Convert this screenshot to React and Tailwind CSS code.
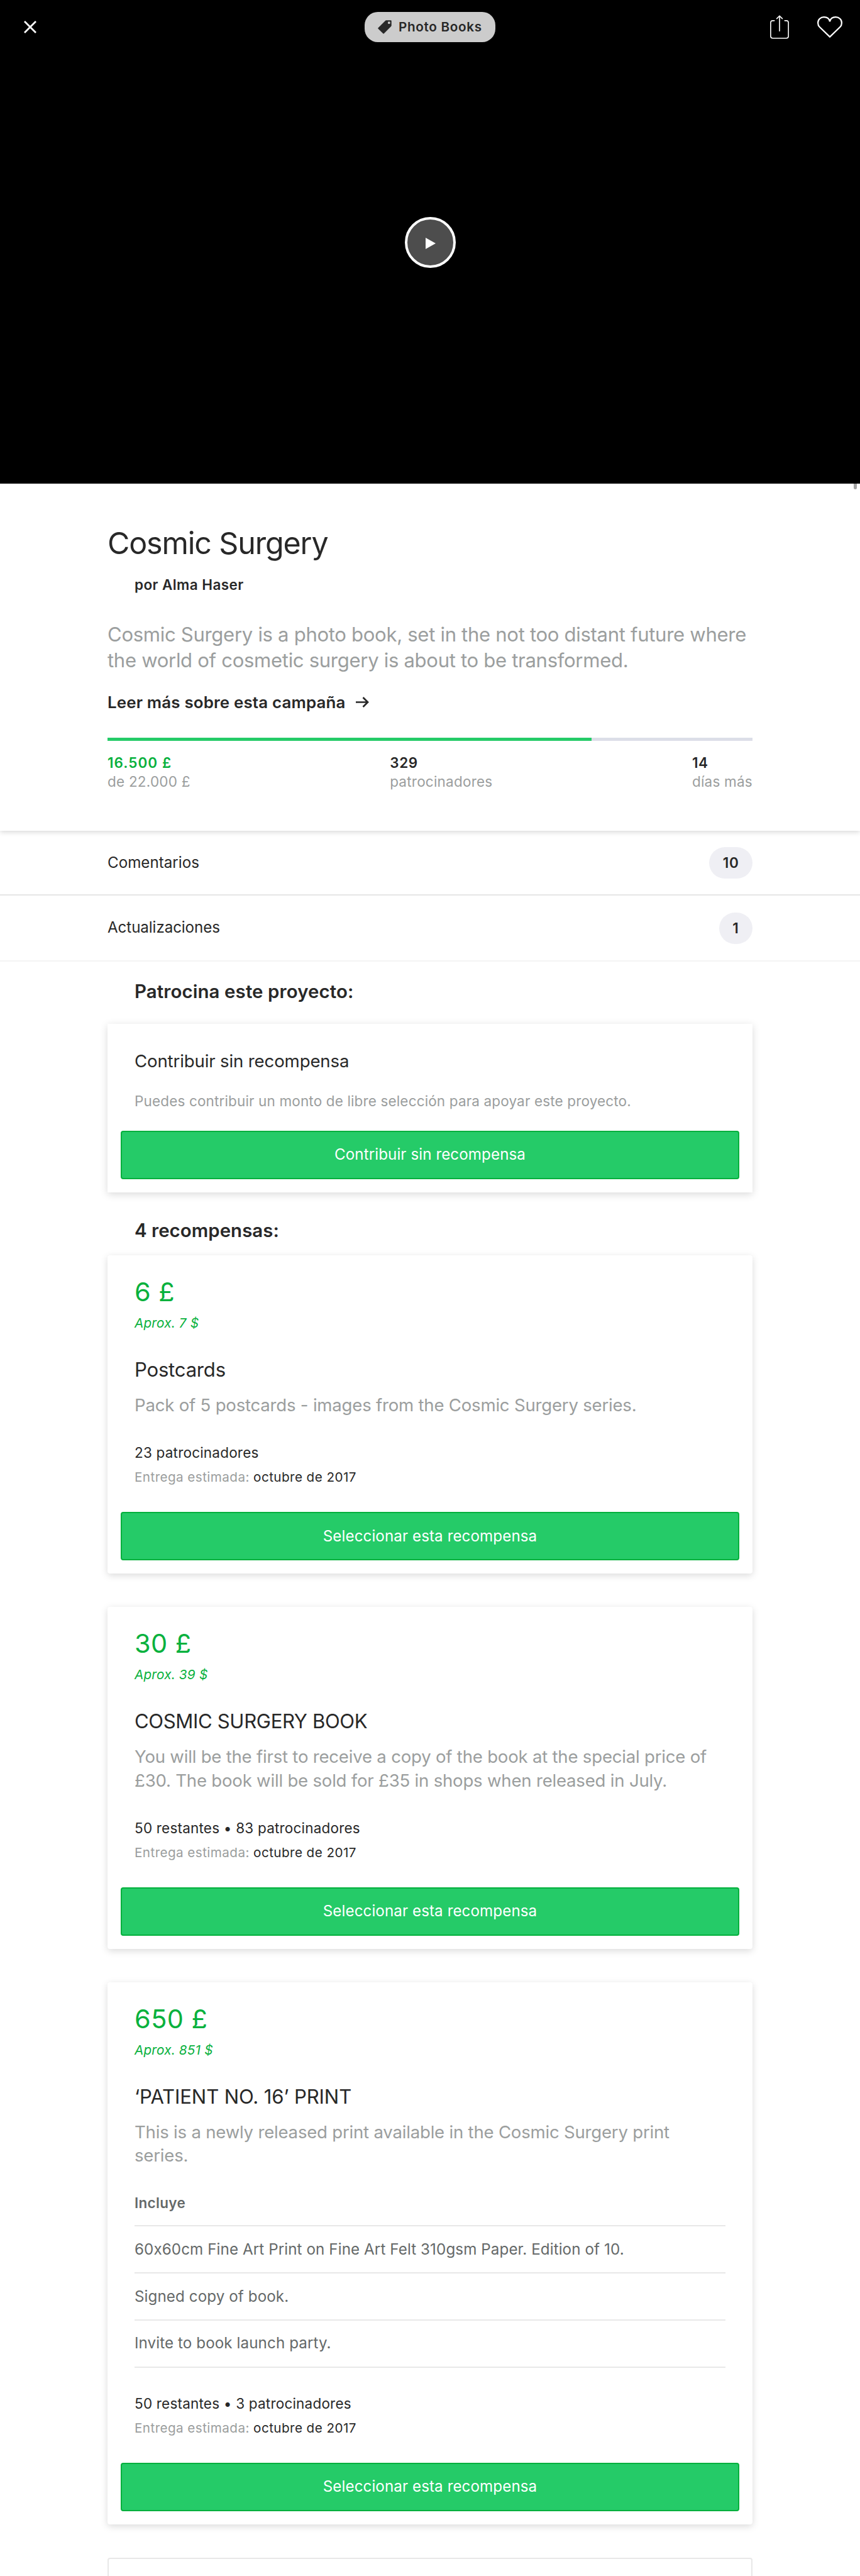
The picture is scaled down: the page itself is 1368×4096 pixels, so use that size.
import React from "react";

const rewards = [
  {
    price: "6 £",
    approx: "Aprox. 7 $",
    title: "Postcards",
    titleClass: "tracking-[-0.0068em]",
    lines: ["Pack of 5 postcards - images from the Cosmic Surgery series."],
    backers: "23 patrocinadores",
  },
  {
    price: "30 £",
    approx: "Aprox. 39 $",
    title: "COSMIC SURGERY BOOK",
    titleClass: "tracking-[-0.0117em]",
    lines: [
      "You will be the first to receive a copy of the book at the special price of",
      "£30. The book will be sold for £35 in shops when released in July.",
    ],
    backers: "50 restantes • 83 patrocinadores",
  },
  {
    price: "650 £",
    approx: "Aprox. 851 $",
    title: "‘PATIENT NO. 16’ PRINT",
    titleClass: "tracking-[-0.0041em]",
    lines: ["This is a newly released print available in the Cosmic Surgery print", "series."],
    includes: [
      "60x60cm Fine Art Print on Fine Art Felt 310gsm Paper. Edition of 10.",
      "Signed copy of book.",
      "Invite to book launch party.",
    ],
    backers: "50 restantes • 3 patrocinadores",
  },
];

function CloseIcon() {
  return (
    <svg className="h-5 w-5" viewBox="0 0 20 20" fill="none" stroke="#fff" strokeWidth="2.8">
      <path d="M1 1L19 19M19 1L1 19" />
    </svg>
  );
}

function TagIcon() {
  return (
    <svg className="h-[22px] w-[22px]" viewBox="164 107 74 74">
      <path
        fill="#282828"
        fillRule="evenodd"
        d="M208 108H233Q237 108 237 112V136Q237 138 235.500 139.500L197 178.500Q194.500 181 192 178.500L166 153.500Q163.500 151 166 148.500L204 110Q206 108 208 108ZM224 114.500A6.500 6.500 0 1 0 224 127.500A6.500 6.500 0 1 0 224 114.500Z"
      />
    </svg>
  );
}

function ShareIcon() {
  return (
    <svg className="h-[38px] w-[30px]" viewBox="105 76 102 129" fill="none" stroke="#fff" strokeWidth="5.500" strokeLinecap="round" strokeLinejoin="round">
      <path d="M128 106H119Q108 106 108 117V190Q108 201 119 201H193Q204 201 204 190V117Q204 106 193 106H184" />
      <path d="M156 162V81M141 95L156 80L171 95" />
    </svg>
  );
}

function HeartIcon() {
  return (
    <svg className="h-9 w-[42px]" viewBox="358 82 140 120" fill="none" stroke="#fff" strokeWidth="7.500" strokeLinejoin="miter">
      <path d="M428 194L374 142C367 135 365 127 365 120C365 102 379 89 397 89C413 89 425 98 428 113C431 98 443 89 459 89C477 89 491 102 491 120C491 127 489 135 482 142Z" />
    </svg>
  );
}

function Hero() {
  return (
    <header className="flex h-[769px] flex-col bg-black">
      <div className="grid h-[85px] grid-cols-3 items-center pl-[38px] pr-[27px] pt-px">
        <button className="justify-self-start" aria-label="Cerrar">
          <CloseIcon />
        </button>
        <div className="ml-[-11px] flex h-12 w-[208px] items-center justify-self-center rounded-[21px] bg-[#ccc] pl-[21px]">
          <TagIcon />
          <span className="ml-[11px] whitespace-nowrap text-[20.7px] font-semibold tracking-[0.032em]">Photo Books</span>
        </div>
        <div className="flex items-center gap-11 justify-self-end">
          <ShareIcon />
          <HeartIcon />
        </div>
      </div>
      <div className="flex grow items-center justify-center pb-[84px]">
        <button className="flex h-[81px] w-[81px] items-center justify-center rounded-full border-4 border-white bg-[#4d4d4d]" aria-label="Reproducir">
          <svg className="ml-[2px] mt-[3px] h-[18px] w-[16px]" viewBox="0 0 16 18">
            <path d="M0 0L16 9L0 18Z" fill="#fff" />
          </svg>
        </button>
      </div>
    </header>
  );
}

function Stat({ value, label, green }) {
  return (
    <div className="text-[22.5px]">
      <div className={green ? "h-[27px] font-semibold leading-[27px] tracking-[0.046em] text-[#08b13d]" : "h-[27px] font-semibold leading-[27px] tracking-[0.03em]"}>{value}</div>
      <div className="mt-[2px] leading-[29px] tracking-[0.01em] text-[#9b9e9e]">{label}</div>
    </div>
  );
}

function Summary() {
  return (
    <section className="relative h-[552px] bg-white px-[171px] pt-[65px] shadow-[0_2px_8px_rgba(0,0,0,0.16)]">
      <div className="absolute right-[5px] top-0 h-[9px] w-[5px] rounded-b-sm bg-[#a3a3a3]" />
      <h1 className="text-[48.4px] leading-[59px] tracking-[-0.0235em]">Cosmic Surgery</h1>
      <p className="ml-[43px] mt-[23px] text-[22.5px] font-semibold leading-[27px] tracking-[0.0185em]">por Alma Haser</p>
      <p className="mt-[46px] h-[81px] whitespace-nowrap text-[31.1px] leading-[40.6px] tracking-[-0.0103em] text-[#9b9e9e]">
        Cosmic Surgery is a photo book, set in the not too distant future where
        <br />
        the world of cosmetic surgery is about to be transformed.
      </p>
      <a className="mt-[30px] flex items-center gap-4 text-[25.9px] font-semibold leading-[33px] tracking-[0.006em]">
        Leer más sobre esta campaña
        <svg className="h-[17px] w-[21px]" viewBox="0 0 21 17" fill="none" stroke="#282828" strokeWidth="2.700">
          <path d="M0 8.500H19M11.500 1L19 8.500L11.500 16" />
        </svg>
      </a>
      <div className="mt-10 h-[5px] bg-[#dcdee8]">
        <div className="h-full w-3/4 bg-[#25cb68]" />
      </div>
      <div className="mt-[21px] flex justify-between">
        <Stat value="16.500 £" label="de 22.000 £" green />
        <Stat value="329" label="patrocinadores" />
        <Stat value="14" label="días más" />
      </div>
    </section>
  );
}

function CountPill({ children }) {
  return (
    <span className="flex h-[50px] items-center rounded-[25px] bg-[#efeff4] px-[21.5px] text-[22.5px] font-semibold tracking-[0.03em]">
      {children}
    </span>
  );
}

function SelectButton({ children }) {
  return (
    <button className="mx-[21.4px] flex h-[77px] items-center justify-center rounded-[4px] border-2 border-[#04b03d] bg-[#25cb68] text-[24.2px] tracking-[0.003em] text-white">
      {children}
    </button>
  );
}

function RewardCard({ reward }) {
  return (
    <article className="flex flex-col rounded-[4px] bg-white pb-[21px] pt-[33px] shadow-[0_3px_12px_rgba(0,0,0,0.15)]">
      <div className="px-[43px]">
        <p className="text-[41.5px] leading-[50px] tracking-[0.01em] text-[#08b13d]">{reward.price}</p>
        <p className="mt-3 text-[20.7px] italic leading-[25px] tracking-[0.01em] text-[#08b13d]">{reward.approx}</p>
        <h3 className={`mt-[42px] text-[31.1px] leading-10 ${reward.titleClass}`}>{reward.title}</h3>
        <div className="mt-[18px] text-[27.6px] leading-[37.3px] tracking-[-0.008em] text-[#9b9e9e]">
          {reward.lines.map((line) => (
            <p key={line} className="whitespace-nowrap">{line}</p>
          ))}
        </div>
        {reward.includes && (
          <div className="mt-[43px] text-[#656969]">
            <h4 className="text-[22.5px] font-semibold leading-[27px] tracking-[0.0134em]">Incluye</h4>
            <ul className="mt-[22px] border-t-2 border-[#e8e8e8]">
              {reward.includes.map((item) => (
                <li key={item} className="flex h-[74.8px] items-center border-b-2 border-[#e8e8e8] text-[24.2px] tracking-[0.0035em] [font-feature-settings:'calt'_0]">
                  {item}
                </li>
              ))}
            </ul>
          </div>
        )}
        <p className="mt-[43px] text-[22.5px] leading-[27px] tracking-[0.009em]">{reward.backers}</p>
        <p className="mt-[13px] text-[20.7px] leading-[25px] tracking-[0.02em]">
          <span className="text-[#9b9e9e]">Entrega estimada:</span> octubre de 2017
        </p>
      </div>
      <div className="mt-[43px] flex flex-col">
        <SelectButton>Seleccionar esta recompensa</SelectButton>
      </div>
    </article>
  );
}

export default function App() {
  return (
    <div className="h-[4096px] w-[1368px] overflow-hidden bg-white font-['Inter',sans-serif] text-[#282828]">
      <Hero />
      <Summary />
      <nav className="text-[24.2px]">
        <div className="flex h-[103px] items-center justify-between border-b-2 border-[#e6e6e6] px-[171px] pt-px">
          <span>Comentarios</span>
          <CountPill>10</CountPill>
        </div>
        <div className="flex h-[105px] items-center justify-between border-b-2 border-[#f4f4f4] px-[171px]">
          <span className="tracking-[-0.0038em]">Actualizaciones</span>
          <CountPill>1</CountPill>
        </div>
      </nav>
      <main className="px-[171px] pt-7">
        <h2 className="ml-[43px] text-[29.4px] font-semibold leading-[39px] tracking-[0.004em]">Patrocina este proyecto:</h2>
        <section className="mt-8 flex flex-col bg-white pb-[21px] pt-[41px] shadow-[0_3px_12px_rgba(0,0,0,0.15)]">
          <h3 className="px-[43px] text-[27.6px] leading-9 tracking-[-0.005em]">Contribuir sin recompensa</h3>
          <p className="mb-[34px] mt-8 px-[43px] text-[22.5px] leading-[27px] tracking-[0.0064em] text-[#9b9e9e]">
            Puedes contribuir un monto de libre selección para apoyar este proyecto.
          </p>
          <SelectButton>Contribuir sin recompensa</SelectButton>
        </section>
        <h2 className="ml-[43px] mt-[41px] text-[29.4px] font-semibold leading-[39px] tracking-[0.002em]">4 recompensas:</h2>
        <div className="mt-5 flex flex-col gap-[53px]">
          {rewards.map((reward) => (
            <RewardCard key={reward.price} reward={reward} />
          ))}
          <div className="h-40 rounded-[4px] border-2 border-[#e8e8e8] bg-white" />
        </div>
      </main>
    </div>
  );
}
